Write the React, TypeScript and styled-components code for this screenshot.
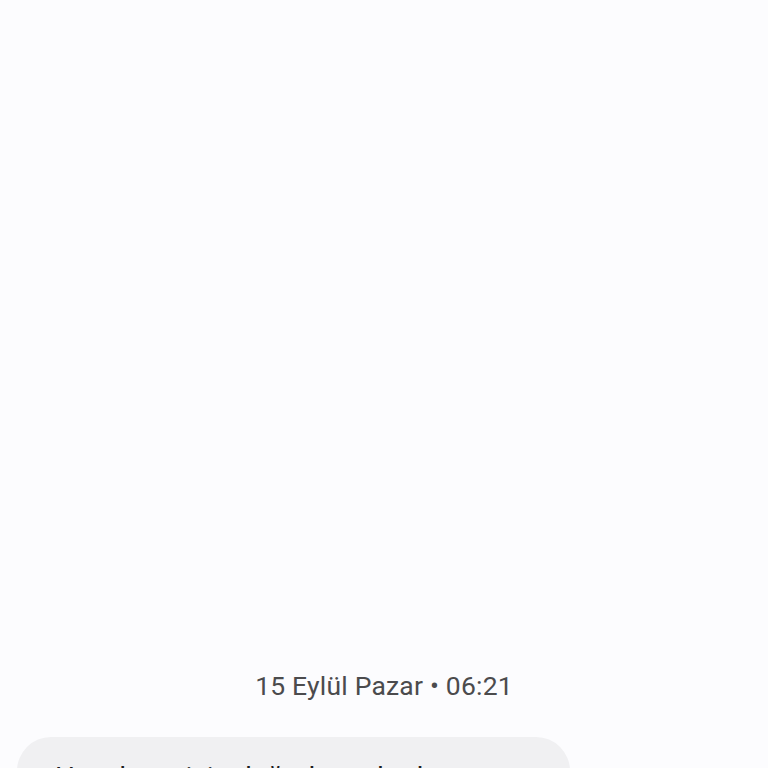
import styled, { createGlobalStyle } from "styled-components";

const GlobalStyle = createGlobalStyle`
  html, body {
    margin: 0;
    padding: 0;
    background: #fcfcfe;
  }
  body {
    font-family: Roboto, "Noto Sans", sans-serif;
  }
`;

const Screen = styled.div`
  height: 768px;
  overflow: hidden;
  display: flex;
  flex-direction: column;
  background: #fcfcfe;
`;

const Thread = styled.div`
  flex: 1;
`;

const DateStamp = styled.div`
  margin-top: 668px;
  text-align: center;
  font-size: 26.5px;
  line-height: 36px;
  color: #4b4b4d;
  letter-spacing: 0.2px;
`;

const Bubble = styled.div`
  margin: 33px 0 0 17px;
  width: 553px;
  box-sizing: border-box;
  padding: 21px 30px 22px 38px;
  background: #f0f0f2;
  border-radius: 34px;
  font-size: 28px;
  line-height: 40px;
  color: #1b1b1d;
`;

export default function App() {
  return (
    <>
      <GlobalStyle />
      <Screen>
        <Thread>
          <DateStamp>15 Eylül Pazar • 06:21</DateStamp>
          <Bubble>
            Hesabınız için doğrulama kodunuz: 482913. Bu kodu kimseyle paylaşmayın.
          </Bubble>
        </Thread>
      </Screen>
    </>
  );
}
